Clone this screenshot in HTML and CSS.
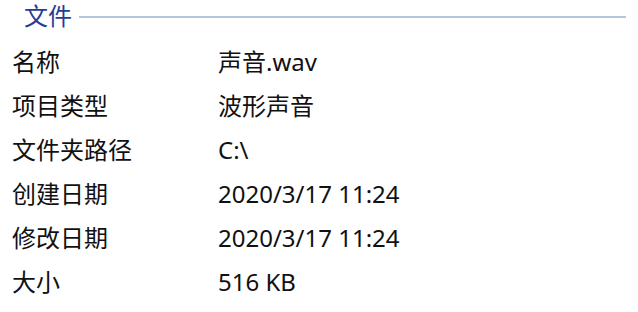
FILE: index.html
```html
<!DOCTYPE html>
<html lang="zh-CN">
<head>
<meta charset="utf-8">
<link rel="stylesheet" href="styles.css">
</head>
<body>
<div class="panel">
  <div class="group-head">
    <span class="group-title">文件</span>
    <span class="group-line"></span>
  </div>
  <div class="props">
    <div class="label">名称</div><div class="value">声音.wav</div>
    <div class="label">项目类型</div><div class="value">波形声音</div>
    <div class="label">文件夹路径</div><div class="value">C:\</div>
    <div class="label">创建日期</div><div class="value">2020/3/17 11:24</div>
    <div class="label">修改日期</div><div class="value">2020/3/17 11:24</div>
    <div class="label">大小</div><div class="value">516 KB</div>
  </div>
</div>
</body>
</html>
```
FILE: styles.css
```css
html, body {
  margin: 0;
  padding: 0;
  background: #ffffff;
}
.panel {
  width: 638px;
  height: 312px;
  font-family: "Noto Sans", "Noto Sans CJK SC", sans-serif;
  font-size: 24px;
  color: #111111;
}
.group-head {
  display: flex;
  align-items: center;
  height: 32px;
  padding-left: 24px;
  padding-right: 12px;
  gap: 7px;
}
.group-title {
  color: #1f3d99;
  line-height: 32px;
}
.group-line {
  flex: 1;
  height: 2px;
  background: #b7c6df;
  margin-top: 1px;
}
.props {
  margin-top: 8px;
  display: grid;
  grid-template-columns: 206px auto;
  grid-auto-rows: 44px;
  align-items: center;
  padding-left: 12px;
}
.label, .value {
  line-height: 44px;
  white-space: nowrap;
}
```
